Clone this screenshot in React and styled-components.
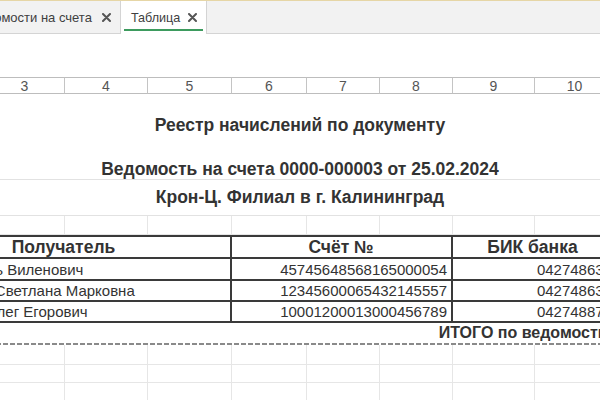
import React from "react";
import styled, { createGlobalStyle, css } from "styled-components";

const GlobalStyle = createGlobalStyle`
    html, body {
        margin: 0;
        padding: 0;
        background: #ffffff;
        overflow: hidden;
    }
    body {
        font-family: "Liberation Sans", Arial, sans-serif;
        color: #333333;
    }
`;

const Page = styled.div`
    width: 600px;
    height: 400px;
    overflow: hidden;
    display: flex;
    flex-direction: column;
`;

const TabBar = styled.div`
    height: 32px;
    flex: 0 0 auto;
    display: flex;
    background: #f2f2f2;
    border-top: 1px solid #e6d6a6;
    border-bottom: 1px solid #d4d4d4;
    margin-left: -42px;
`;

const Tab = styled.div`
    display: flex;
    align-items: center;
    gap: ${({ $active }) => ($active ? "8px" : "10px")};
    padding: 0 9px 0 ${({ $active }) => ($active ? "10px" : "13px")};
    font-size: 13px;
    color: #404040;
    border-right: 1px solid #d4d4d4;
    position: relative;

    ${({ $active }) =>
        $active &&
        css`
            background: #ffffff;
            margin-bottom: -1px;
            font-size: 12.6px;

            &::after {
                content: "";
                position: absolute;
                left: 3px;
                right: 3px;
                bottom: 3px;
                height: 2px;
                background: #3d9b5e;
            }
        `}
`;

const CloseIcon = () => (
    <svg width="9" height="9" viewBox="0 0 9 9">
        <path d="M1 1 L8 8 M8 1 L1 8" stroke="#555" strokeWidth="2" strokeLinecap="round" />
    </svg>
);

const Sheet = styled.div`
    margin-top: 43px;
    margin-left: -102px;
    display: grid;
    grid-template-columns: 87px 80px 83px 84px 75px 73px 73px 82px 80px 87px;
    grid-template-rows: 17px 63px 23px 36px 19px 24px 22px 21px 21px 22px 20px 18px 20px;
`;

const ColHead = styled.div`
    display: flex;
    align-items: center;
    justify-content: center;
    font-size: 14px;
    color: #555555;
    border-top: 1px solid #bdbdbd;
    border-bottom: 1px solid #bdbdbd;
    border-right: 1px solid #c4c4c4;
`;

const Title = styled.div`
    grid-column: 1 / -1;
    display: flex;
    align-items: center;
    justify-content: center;
    padding-top: ${({ $shift }) => $shift ?? 0}px;
    font-weight: bold;
    font-size: 17.5px;
    color: #333333;
    border-bottom: 1px solid ${({ $line }) => ($line ? "#e2e2e2" : "transparent")};
`;

const GridCell = styled.div`
    border-right: 1px solid #e6e6e6;
    border-bottom: 1px solid #e6e6e6;
`;

const TCell = styled.div`
    grid-column: ${({ $col }) => $col};
    display: flex;
    align-items: center;
    justify-content: ${({ $align }) =>
        $align === "right" ? "flex-end" : $align === "center" ? "center" : "flex-start"};
    padding: 0 ${({ $pr }) => $pr ?? 4}px 0 3px;
    font-size: ${({ $head }) => ($head ? "17.5px" : "15px")};
    font-weight: ${({ $head }) => ($head ? "bold" : "normal")};
    color: #333333;
    white-space: nowrap;
    overflow: hidden;
    border-right: 2px solid #3a3a3a;
    border-bottom: 2px solid #3a3a3a;
    ${({ $top }) =>
        $top &&
        css`
            border-top: 2px solid #3a3a3a;
        `}
`;

const dashed = css`
    background-image: repeating-linear-gradient(
        to right,
        #8a8a8a 0,
        #8a8a8a 5px,
        transparent 5px,
        transparent 7px
    );
    background-size: 100% 2px;
    background-position: bottom left;
    background-repeat: no-repeat;
`;

const TotalCell = styled.div`
    grid-column: 1 / 10;
    display: flex;
    align-items: center;
    justify-content: flex-end;
    padding: 0 2px 2px 0;
    font-size: 16px;
    font-weight: bold;
    color: #333333;
    white-space: nowrap;
    ${dashed}
`;

const TotalRest = styled.div`
    grid-column: 10 / -1;
    ${dashed}
`;

const columns = [2, 3, 4, 5, 6, 7, 8, 9, 10, 11];

const rows = [
    ["Шишкин Игорь Виленович", "45745648568165000054", "042748634"],
    ["Кондратьева Светлана Марковна", "12345600065432145557", "042748634"],
    ["Гончаренко Олег Егорович", "10001200013000456789", "042748877"],
];

const EmptyRow = () => columns.map((c) => <GridCell key={c} />);

export default function App() {
    return (
        <Page>
            <GlobalStyle />
            <TabBar>
                <Tab>
                    Ведомости на счета
                    <CloseIcon />
                </Tab>
                <Tab $active>
                    Таблица
                    <CloseIcon />
                </Tab>
            </TabBar>

            <Sheet>
                {columns.map((c) => (
                    <ColHead key={c}>{c}</ColHead>
                ))}

                <Title>Реестр начислений по документу</Title>
                <Title $line $shift={3}>
                    Ведомость на счета 0000-000003 от 25.02.2024
                </Title>
                <Title $line>Крон-Ц. Филиал в г. Калининград</Title>

                <EmptyRow />

                <TCell $col="1 / 5" $align="center" $head $top>
                    Получатель
                </TCell>
                <TCell $col="5 / 8" $align="center" $head $top>
                    Счёт №
                </TCell>
                <TCell $col="8 / 10" $align="center" $head $top>
                    БИК банка
                </TCell>
                <TCell $col="10 / -1" $head $top />

                {rows.map(([name, account, bik]) => (
                    <React.Fragment key={account}>
                        <TCell $col="1 / 5">{name}</TCell>
                        <TCell $col="5 / 8" $align="right">
                            {account}
                        </TCell>
                        <TCell $col="8 / 10" $align="right" $pr={1}>
                            {bik}
                        </TCell>
                        <TCell $col="10 / -1" />
                    </React.Fragment>
                ))}

                <TotalCell>ИТОГО по ведомости:</TotalCell>
                <TotalRest />

                <EmptyRow />
                <EmptyRow />
                <EmptyRow />
            </Sheet>
        </Page>
    );
}
